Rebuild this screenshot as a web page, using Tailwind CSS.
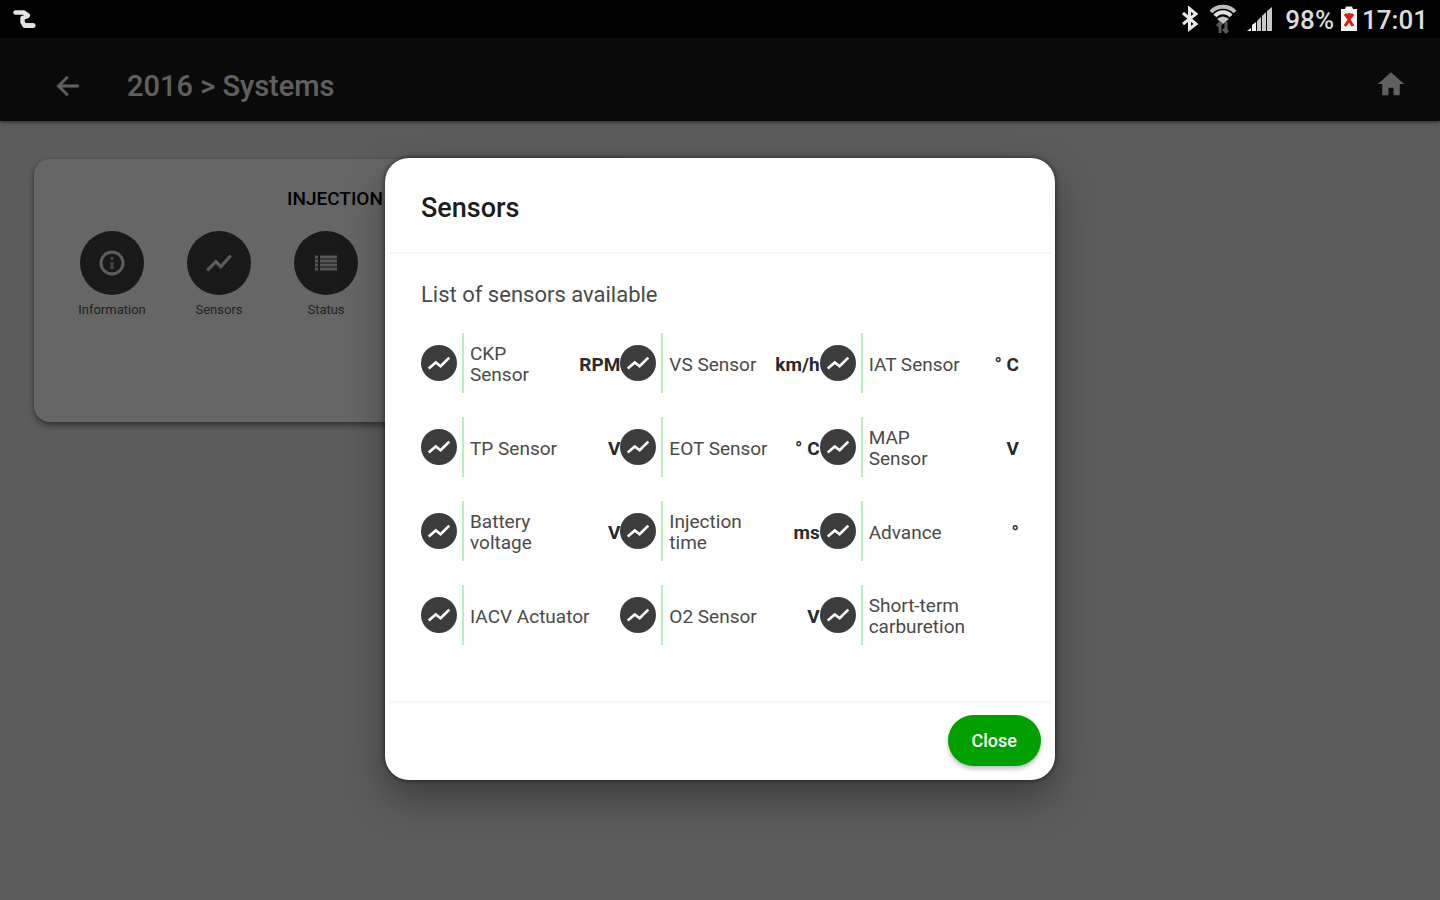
<!DOCTYPE html>
<html lang="en">
<head>
<meta charset="utf-8">
<meta name="viewport" content="width=device-width, initial-scale=1">
<title>2016 &gt; Systems</title>
<script src="https://cdn.jsdelivr.net/npm/@tailwindcss/browser@4"></script>
</head>
<body class="flex min-h-screen flex-col bg-[#e6e6e6] font-['Roboto',sans-serif] text-black">
<svg class="hidden" aria-hidden="true">
  <symbol id="trend" viewBox="0 0 24 24"><path d="M3.5 18.49l6-6.01 4 4L22 6.92l-1.41-1.41-7.09 7.97-4-4L2 16.99z"/></symbol>
  <symbol id="trend-small" viewBox="0 0 24 24"><path d="M2.500 17L9 11.500l4.500 3.500L21.500 7" fill="none"/></symbol>
</svg>

<div class="flex h-[38px] items-center justify-between bg-black pr-3 pl-3 text-[#dcdcdc]">
  <svg class="h-6 w-7" viewBox="0 0 28 24" fill="none" stroke="#e4e4e4" stroke-linejoin="round" aria-hidden="true">
    <path d="M3.500 5.500H12L16 8.500" stroke-width="4.500" stroke-linecap="round"/>
    <path d="M16 9L10.500 11V15L13 19" stroke-width="4.500"/>
    <path d="M13 18.500H21" stroke-width="5" stroke-linecap="round"/>
  </svg>
  <div class="flex items-center">
    <svg class="h-[26px] w-[22px]" viewBox="0 0 22 26" fill="none" stroke="#e8e8e8" stroke-width="3" aria-hidden="true"><path d="M4 7l13 11-6.500 5V2.500L17 8 4 18"/></svg>
    <svg class="ml-2 h-8 w-7" viewBox="0 0 28 32" fill="none" aria-hidden="true">
      <path d="M2 9C8 2 20 2 26 9" stroke="#bdbdbd" stroke-width="4"/>
      <path d="M6 13C10 8 18 8 22 13" stroke="#e2e2e2" stroke-width="4"/>
      <path d="M8 16q6-5 12 0l-6 5z" fill="#c4c4c4"/>
      <path d="M11 19v11M8 23l3-3 2 2M17 30V19M14 26l3 3 2-2" stroke="#595959" stroke-width="3"/>
    </svg>
    <svg class="ml-2.5 h-[26px] w-[26px]" viewBox="0 0 26 26" aria-hidden="true"><path d="M0 25l4-3v3zM5 25v-6l4-3v9z" fill="#f2f2f2"/><path d="M10 25V15l4-4v14zM15 25V10l4-4v19zM20 25V5l5-4v24z" fill="#c8c8c8"/></svg>
    <span class="ml-3 pt-0.5 text-[26px] leading-8 font-medium">98%</span>
    <svg class="ml-1.5 h-[26px] w-[18px]" viewBox="0 0 18 26" aria-hidden="true"><path d="M1 3h4l1-2.500h6L13 3h4v22H1z" fill="#f5f5f5"/><path d="M5 8l4 5 4-5M9 7v6M5 20l4-6 4 6" stroke="#dc1c10" stroke-width="3" fill="none"/></svg>
    <span class="ml-1 pt-0.5 text-[26px] leading-8 font-medium">17:01</span>
  </div>
</div>

<div class="relative flex flex-1 flex-col">
  <header class="flex h-[83px] items-center bg-[#1a1a1a] pt-3 pr-[34px] pl-[53px] text-[#f0f0f0] shadow-[0_1px_4px_rgba(0,0,0,0.6)]">
    <button type="button" aria-label="Back" class="size-[30px]">
      <svg class="size-[30px]" viewBox="0 0 24 24" fill="currentColor" stroke="currentColor"><path d="M20.500 11H6.830l5.580-5.590L11 4l-8 8 8 8 1.410-1.410L6.830 13H20.500z" stroke-width=".4"/></svg>
    </button>
    <h1 class="ml-11 text-[29px] leading-9 font-medium">2016 &gt; Systems</h1>
    <a href="#home" aria-label="Home" class="ml-auto pb-1">
      <svg class="size-[30px]" viewBox="0 0 24 24" fill="currentColor"><path d="M10 21v-6h4v6h5v-9h3.500L12 2.500 1.500 12H5v9z"/></svg>
    </a>
  </header>

  <main class="flex-1 px-[34px] pt-[38px]">
    <section class="h-[263px] max-w-[602px] rounded-2xl bg-white px-[38px] pt-7 shadow-[0_3px_6px_rgba(0,0,0,0.5)]">
      <h2 class="text-center text-[19px] leading-6 font-medium">INJECTION</h2>
      <div class="mt-5 flex text-[13px] leading-4 text-[#555]">
        <button type="button" class="flex w-20 flex-col items-center gap-[7px]">
          <span class="flex size-16 items-center justify-center rounded-full bg-[#3f3f3f]">
            <svg class="size-7" viewBox="0 0 28 28" fill="none" stroke="#e8e8e8" stroke-width="3" aria-hidden="true"><circle cx="14" cy="14" r="11"/><path d="M14 13v7M14 8v3" stroke="#b0b0b0"/></svg>
          </span>Information</button>
        <button type="button" class="ml-[27px] flex w-20 flex-col items-center gap-[7px]">
          <span class="flex size-16 items-center justify-center rounded-full bg-[#3f3f3f]">
            <svg class="size-[30px] fill-[#e8e8e8] stroke-[#e8e8e8] stroke-[0.6]" aria-hidden="true"><use href="#trend"/></svg>
          </span>Sensors</button>
        <button type="button" class="ml-[27px] flex w-20 flex-col items-center gap-[7px]">
          <span class="flex size-16 items-center justify-center rounded-full bg-[#3f3f3f]">
            <svg class="h-4 w-6" viewBox="0 0 24 16" fill="none" stroke="#d8d8d8" stroke-width="3" aria-hidden="true"><path d="M1 2h3M6 2h17M1 6h3M6 6h17M1 10h3M6 10h17M1 14h3M6 14h17"/></svg>
          </span>Status</button>
      </div>
    </section>
  </main>

  <div class="absolute inset-0 flex items-center justify-center bg-black/60">
    <div role="dialog" aria-modal="true" aria-labelledby="dialog-title" class="w-full max-w-[670px] rounded-3xl bg-white shadow-[0_18px_40px_rgba(0,0,0,0.35),0_0_5px_rgba(0,0,0,0.6)]">
      <div class="mx-1 flex h-24 items-center border-b-2 border-[#f7f7f7] px-8 pt-1.5">
        <h2 id="dialog-title" class="text-[27px] leading-8 font-medium text-[#1c1c1c]">Sensors</h2>
      </div>
      <div class="px-9 pt-[27px] pb-14">
        <p class="text-[22px] leading-7 text-[#4a4a4a]">List of sensors available</p>
        <ul id="sensors" class="mt-6 grid grid-cols-3 gap-y-6 text-[19px] leading-[21px]"></ul>
      </div>
      <div class="mx-1 flex justify-end border-t-2 border-[#f7f7f7] px-2.5 pt-3 pb-3.5">
        <button type="button" class="h-[51px] rounded-full bg-[#00a000] px-6 text-[18px] leading-6 font-medium text-white shadow-[0_3px_4px_rgba(0,0,0,0.25)]">Close</button>
      </div>
    </div>
  </div>
</div>

<script>
const sensors = [
  ['CKP<br>Sensor', 'RPM'], ['VS Sensor', 'km/h'], ['IAT Sensor', '° C'],
  ['TP Sensor', 'V'], ['EOT Sensor', '° C'], ['MAP<br>Sensor', 'V'],
  ['Battery<br>voltage', 'V'], ['Injection<br>time', 'ms'], ['Advance', '°'],
  ['IACV Actuator', ''], ['O2 Sensor', 'V'], ['Short-term<br>carburetion', '']
];
document.getElementById('sensors').innerHTML = sensors.map(([name, unit]) => `
  <li class="flex h-[60px] min-w-0 items-center">
    <span class="z-10 flex size-9 shrink-0 items-center justify-center rounded-full bg-[#3c3c3c]"><svg class="size-[26px] stroke-white stroke-[2.5]" aria-hidden="true"><use href="#trend-small"/></svg></span>
    <span class="ml-[5px] flex h-full items-center border-l-2 border-[#bdeebf] pl-1.5 whitespace-nowrap text-[#4a4a4a]"><span class="pt-0.5">${name}</span></span>
    <span class="ml-auto pt-0.5 font-bold whitespace-nowrap text-[#2a2a2a]">${unit}</span>
  </li>`).join('');
</script>
</body>
</html>
